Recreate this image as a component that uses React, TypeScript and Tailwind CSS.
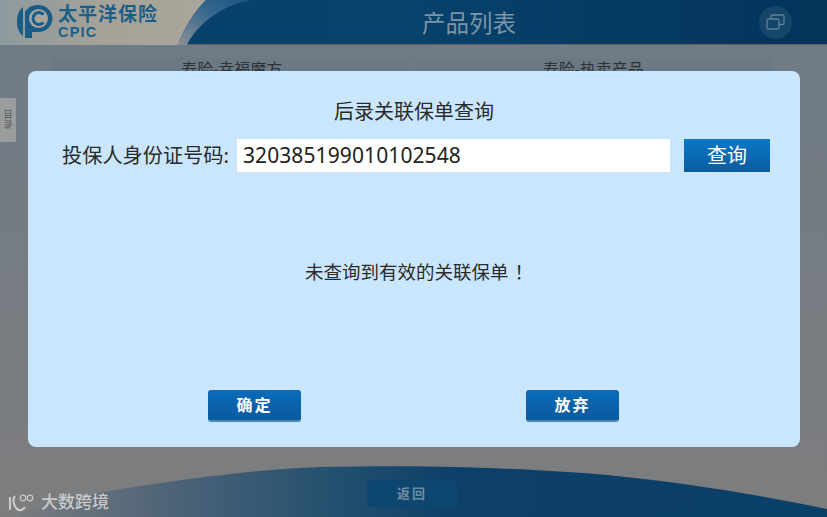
const cjk = "font-['Noto_Sans','Noto_Sans_CJK_SC',sans-serif]";

function Logo() {
  return (
    <svg width="36" height="34" viewBox="0 0 36 34">
      <path d="M6 2C1 6 0 11 0 17C0 23 2 28 6 31Z" fill="#1a5c88" />
      <path d="M8 6H9C11 2 16 0 21.500 0C29 0 35.500 6 35.500 13.500C35.500 21 29 27 21.500 27H15V33H8Z" fill="#1a5c88" />
      <circle cx="21.500" cy="13.500" r="9.500" fill="#a7a69c" />
      <path d="M26.500 9.500A6 6 0 1 0 26.500 17.500" fill="none" stroke="#1a5c88" strokeWidth="3" />
    </svg>
  );
}

function DialogButton({ label }: { label: string }) {
  return (
    <button className="w-[93px] h-[32px] rounded-[3px] border-b-2 border-[#4d87b3] bg-gradient-to-b from-[#0a6cba] to-[#0a5a9c] text-white text-[16px] font-bold tracking-[2px]">
      {label}
    </button>
  );
}

export default function App() {
  return (
    <div className={`relative w-[827px] h-[517px] overflow-hidden flex flex-col bg-gradient-to-b from-[#6d7b86] to-[#7d7d7e] ${cjk}`}>
      {/* header */}
      <div className="relative h-[45px] shrink-0 flex items-center justify-between border-b border-[#5f6468] bg-gradient-to-r from-[#06406b] via-[#07426c] to-[#03345a]">
        <svg className="absolute inset-0" width="827" height="45" viewBox="0 0 827 45" preserveAspectRatio="none">
          <defs>
            <linearGradient id="head" x1="0" x2="1" y1="0" y2="0">
              <stop offset="0" stopColor="#8e9a9e" />
              <stop offset="0.5" stopColor="#a5a298" />
              <stop offset="1" stopColor="#a9a69b" />
            </linearGradient>
            <linearGradient id="arc" x1="0" x2="1" y1="1" y2="0">
              <stop offset="0" stopColor="#8a9196" />
              <stop offset="0.6" stopColor="#33668d" />
              <stop offset="1" stopColor="#1d5682" />
            </linearGradient>
          </defs>
          <path d="M0 0H206C194 12 184 28 178 45H0Z" fill="url(#head)" />
          <path d="M206 0C194 12 184 28 178 45H187C194 30 214 8 250 0Z" fill="url(#arc)" />
        </svg>
        <div className="relative flex items-center pl-[17px] gap-[5px]">
          <Logo />
          <div className="flex flex-col text-[#1c5f8a] font-semibold">
            <span className="text-[19px] leading-[19px] tracking-[1px]">太平洋保险</span>
            <span className="mt-[2px] text-[14.500px] leading-[13px] tracking-[1.200px] font-['Liberation_Sans',sans-serif]">CPIC</span>
          </div>
        </div>
        <div className="absolute left-[422px] top-[8px] text-[23.500px] leading-[30px] text-[#7b94a6]">产品列表</div>
        <div className="relative mr-[35px] w-[33px] h-[33px] rounded-full bg-[#14466a] flex items-center justify-center">
          <svg width="19" height="16" viewBox="0 0 19 16" fill="none" stroke="#5f8199" strokeWidth="1.300">
            <rect x="1" y="5" width="12" height="10" rx="1.500" />
            <path d="M5 5V2.500A1.500 1.500 0 0 1 6.500 1H16.500A1.500 1.500 0 0 1 18 2.500V9A1.500 1.500 0 0 1 16.500 10.500H13" />
          </svg>
        </div>
      </div>

      {/* page behind the dialog */}
      <div className="relative flex-1 flex pl-[52px] pr-[54px] pt-[13px] gap-[2px]">
        <div className="absolute left-0 top-[53px] w-[16px] h-[44px] rounded-r-[2px] bg-[#9a9d9d] flex items-center justify-center">
          <span className="text-[9px] leading-[10px] w-[9px] text-[#565a5d]">目录</span>
        </div>
        <div className="flex-1 h-[30px] bg-[#6b7985] text-center text-[16px] leading-[22px] text-[#2c3136]">寿险-幸福魔方</div>
        <div className="flex-1 h-[30px] bg-[#6b7985] text-center text-[16px] leading-[22px] text-[#2c3136]">寿险-热卖产品</div>
      </div>

      {/* footer */}
      <div className="relative h-[52px] shrink-0 flex items-end justify-center pb-[10px] pr-[3px]">
        <svg className="absolute inset-0" width="827" height="52" viewBox="0 0 827 52">
          <defs>
            <linearGradient id="foot" x1="0" x2="1" y1="0" y2="0">
              <stop offset="0.02" stopColor="#7a7c7e" />
              <stop offset="0.2" stopColor="#4f6478" />
              <stop offset="0.4" stopColor="#24506f" />
              <stop offset="0.55" stopColor="#0c4068" />
              <stop offset="1" stopColor="#0a3f66" />
            </linearGradient>
          </defs>
          <path d="M0 52C40 44 90 28 133 22C200 12 260 4 320 2C370 1 420 1 450 2C500 3 560 6 607 10C690 18 770 32 827 44V52Z" fill="url(#foot)" />
        </svg>
        <div className="relative w-[90px] h-[27px] rounded-[3px] bg-[#0d466f] flex items-center justify-center text-[13px] font-bold tracking-[2px] text-[#6f8da3]">返回</div>
      </div>

      {/* watermark */}
      <div className="absolute left-[8px] bottom-[5px] flex items-center gap-[5px] text-[#c8cacb]">
        <svg width="28" height="20" viewBox="0 0 28 20" fill="none" stroke="#c8cacb" strokeWidth="2.200">
          <path d="M2 5V18" />
          <path d="M7 4C4 8 6 14 9 17C12 19 15 18 17 15" />
          <circle cx="15" cy="6" r="2.800" strokeWidth="1.200" />
          <circle cx="22" cy="6" r="2.800" strokeWidth="1.200" />
        </svg>
        <span className="text-[17px] leading-[20px] font-medium">大数跨境</span>
      </div>

      {/* dialog */}
      <div className="absolute left-[28px] top-[71px] w-[772px] h-[376px] rounded-[8px] bg-[#cae6fc] flex flex-col px-[34px] text-[#2a2a2a]">
        <div className="pt-[28px] text-center text-[20px] leading-[26px]">后录关联保单查询</div>
        <div className="mt-[14px] mr-[-4px] flex items-center h-[33px] gap-[8px]">
          <span className="text-[20.200px] whitespace-nowrap">投保人身份证号码:</span>
          <div className="shrink-0 w-[433px] h-[33px] bg-white pl-[6px] text-[21px] leading-[33px] tracking-[0.100px] text-[#222]">320385199010102548</div>
          <button className="shrink-0 ml-[6px] w-[86px] h-[33px] bg-gradient-to-b from-[#0a78c8] to-[#0a5c9e] text-white text-[20px]">查询</button>
        </div>
        <div className="mt-[87px] text-center text-[18.500px] leading-[26px] pl-[10px]">
          未查询到有效的关联保单<span className="ml-[6px]">！</span>
        </div>
        <div className="mt-[105px] flex justify-between pl-[146px] pr-[147px]">
          <DialogButton label="确定" />
          <DialogButton label="放弃" />
        </div>
      </div>
    </div>
  );
}
